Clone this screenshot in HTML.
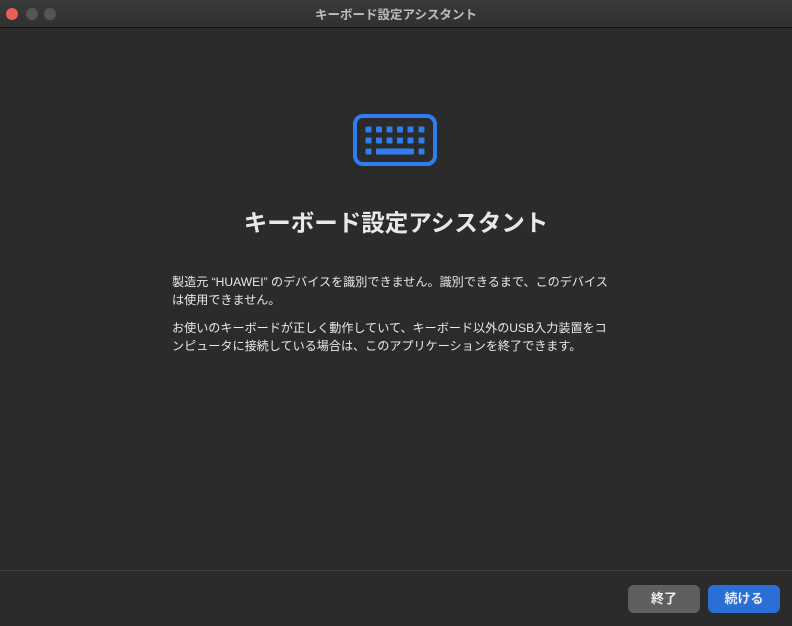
<!DOCTYPE html>
<html><head><meta charset="utf-8"><style>
*{margin:0;padding:0;box-sizing:border-box}
body{width:792px;height:626px;background:#2b2b2b;overflow:hidden;position:relative;font-family:"Liberation Sans","Noto Sans CJK JP",sans-serif;color:#e6e6e6}
.tb{position:absolute;left:0;top:0;width:792px;height:28px;background:linear-gradient(#3a3a3a,#303030);border-bottom:1px solid #111}
.tb .t{position:absolute;left:0;right:0;top:4px;text-align:center;font-size:12.5px;color:#bdbdbd;font-weight:bold}
.d{position:absolute;top:8px;width:12px;height:12px;border-radius:50%}
h1{position:absolute;left:0;width:792px;top:204px;text-align:center;font-size:23.5px;font-weight:bold;color:#e8e8e8;white-space:nowrap}
.p{position:absolute;left:172px;font-size:12.1px;line-height:18px;white-space:nowrap;color:#e8e8e8}
.sep{position:absolute;left:0;top:570px;width:792px;height:1px;background:#3f3f3f}
.b{position:absolute;top:585px;width:72px;height:28px;border-radius:6px;font-size:13px;font-weight:bold;text-align:center;line-height:28px;color:#eee}
</style></head><body>
<div class="tb">
<div class="d" style="left:6px;background:#ec5f57"></div>
<div class="d" style="left:26px;background:#555"></div>
<div class="d" style="left:44px;background:#555"></div>
<div class="t">キーボード設定アシスタント</div>
</div>
<svg style="position:absolute;left:350px;top:111px" width="92" height="58" viewBox="350 111 92 58">
<rect x="355" y="116" width="80" height="48" rx="8" fill="none" stroke="#2f7df0" stroke-width="4"/>
<g fill="#2f7df0">
<rect x="365.5" y="126.5" width="6" height="6" rx="1"/><rect x="376" y="126.5" width="6" height="6" rx="1"/><rect x="386.5" y="126.5" width="6" height="6" rx="1"/><rect x="397" y="126.5" width="6" height="6" rx="1"/><rect x="407.5" y="126.5" width="6" height="6" rx="1"/><rect x="418.5" y="126.5" width="6" height="6" rx="1"/>
<rect x="365.5" y="137.5" width="6" height="6" rx="1"/><rect x="376" y="137.5" width="6" height="6" rx="1"/><rect x="386.5" y="137.5" width="6" height="6" rx="1"/><rect x="397" y="137.5" width="6" height="6" rx="1"/><rect x="407.5" y="137.5" width="6" height="6" rx="1"/><rect x="418.5" y="137.5" width="6" height="6" rx="1"/>
<rect x="365.5" y="148.5" width="6" height="6" rx="1"/><rect x="376" y="148.5" width="38" height="6" rx="1"/><rect x="418.5" y="148.5" width="6" height="6" rx="1"/>
</g></svg>
<h1>キーボード設定アシスタント</h1>
<div class="p" style="top:273px">製造元 “HUAWEI” のデバイスを識別できません。識別できるまで、このデバイス<br>は使用できません。</div>
<div class="p" style="top:319px">お使いのキーボードが正しく動作していて、キーボード以外のUSB入力装置をコ<br>ンピュータに接続している場合は、このアプリケーションを終了できます。</div>
<div class="sep"></div>
<div class="b" style="left:628px;background:#5f5f5f">終了</div>
<div class="b" style="left:708px;background:#2a6fd6">続ける</div>
</body></html>
